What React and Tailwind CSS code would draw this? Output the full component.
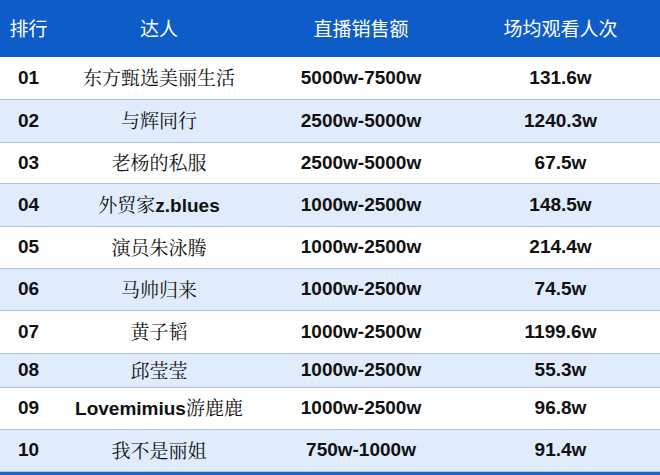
const rows = [
  { rank: '01', name: '东方甄选美丽生活', sales: '5000w-7500w', views: '131.6w', h: 'h-[43px]' },
  { rank: '02', name: '与辉同行', sales: '2500w-5000w', views: '1240.3w', h: 'h-[43px]' },
  { rank: '03', name: '老杨的私服', sales: '2500w-5000w', views: '67.5w', h: 'h-[41px]' },
  { rank: '04', name: '外贸家z.blues', sales: '1000w-2500w', views: '148.5w', h: 'h-[43px]' },
  { rank: '05', name: '演员朱泳腾', sales: '1000w-2500w', views: '214.4w', h: 'h-[42px]' },
  { rank: '06', name: '马帅归来', sales: '1000w-2500w', views: '74.5w', h: 'h-[42px]' },
  { rank: '07', name: '黄子韬', sales: '1000w-2500w', views: '1199.6w', h: 'h-[43px]' },
  { rank: '08', name: '邱莹莹', sales: '1000w-2500w', views: '55.3w', h: 'h-[34px]' },
  { rank: '09', name: 'Lovemimius游鹿鹿', sales: '1000w-2500w', views: '96.8w', h: 'h-[42px]' },
  { rank: '10', name: '我不是丽姐', sales: '750w-1000w', views: '91.4w', h: 'h-[42px]' },
]

const cols = 'grid grid-cols-[57px_204px_200px_199px] items-center'
const arial = "font-[family-name:'Liberation_Sans',Arial,sans-serif] font-bold"

// latin parts of a name are bold sans, the chinese part is plain song
const Name = ({ text }) => {
  const parts = text.split(/([A-Za-z.]+)/).filter(Boolean)
  return (
    <span className="whitespace-nowrap">
      {parts.map((p, i) =>
        /[A-Za-z.]/.test(p)
          ? <span key={i} className={arial}>{p}</span>
          : <span key={i} className="font-[family-name:'Noto_Serif_CJK_SC','Noto_Sans_CJK_SC',serif]">{p}</span>
      )}
    </span>
  )
}

const App = () => {
  return (
    <div className="w-[660px] h-[475px] overflow-hidden bg-white text-[#111]">
      <div className={`${cols} h-[57px] bg-[#0e5cc8] text-white text-[19px] text-center font-[family-name:'Noto_Sans_CJK_SC','Liberation_Sans',sans-serif]`}>
        <div>排行</div>
        <div>达人</div>
        <div>直播销售额</div>
        <div>场均观看人次</div>
      </div>
      {rows.map((r, i) => (
        <div
          key={r.rank}
          className={`${cols} ${r.h} border-b border-[#a9c4ec] text-center text-[19px] ${i % 2 ? 'bg-[#e0ebfb]' : 'bg-white'}`}
        >
          <div className={arial}>{r.rank}</div>
          <div><Name text={r.name} /></div>
          <div className={arial}>{r.sales}</div>
          <div className={arial}>{r.views}</div>
        </div>
      ))}
      <div className="h-[3px] bg-[#1a66d0]" />
    </div>
  )
}

export default App
